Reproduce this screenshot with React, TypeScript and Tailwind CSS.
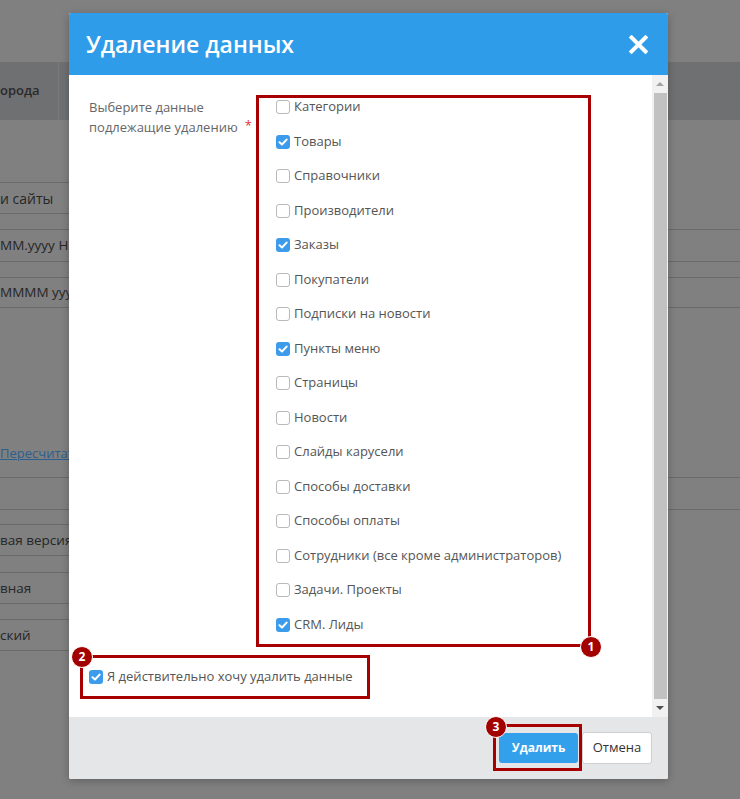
import React from "react";

const items: { label: string; checked: boolean }[] = [
  { label: "Категории", checked: false },
  { label: "Товары", checked: true },
  { label: "Справочники", checked: false },
  { label: "Производители", checked: false },
  { label: "Заказы", checked: true },
  { label: "Покупатели", checked: false },
  { label: "Подписки на новости", checked: false },
  { label: "Пункты меню", checked: true },
  { label: "Страницы", checked: false },
  { label: "Новости", checked: false },
  { label: "Слайды карусели", checked: false },
  { label: "Способы доставки", checked: false },
  { label: "Способы оплаты", checked: false },
  { label: "Сотрудники (все кроме администраторов)", checked: false },
  { label: "Задачи. Проекты", checked: false },
  { label: "CRM. Лиды", checked: true },
];

function Checkbox({ checked }: { checked: boolean }) {
  if (checked) {
    return (
      <span className="flex h-[14px] w-[14px] shrink-0 items-center justify-center rounded-[3px] bg-[#3c9bea]">
        <svg width="10" height="10" viewBox="0 0 10 10">
          <path d="M1.5 5.2 L4 7.5 L8.6 2.6" fill="none" stroke="white" strokeWidth="2" strokeLinecap="round" strokeLinejoin="round" />
        </svg>
      </span>
    );
  }

  return <span className="h-[14px] w-[14px] shrink-0 rounded-[3px] border border-[#b9b9b9] bg-white" />;
}

function Badge({ n, className }: { n: number; className: string }) {
  return (
    <span
      className={
        "absolute flex h-[22px] w-[22px] items-center justify-center rounded-full border border-white bg-[#a30000] text-[12px] font-bold leading-none text-white " +
        className
      }
    >
      {n}
    </span>
  );
}

function Background() {
  return (
    <div className="flex flex-col text-[13px] text-[#262626]">
      <div className="h-[62px]" />
      <div className="flex h-[58px] items-center bg-[#6f7072]">
        <div className="flex h-full w-[59px] items-center border-r border-[#797a7c] font-semibold text-[#2a2a2a]">
          орода
        </div>
      </div>
      <div className="h-[62px]" />
      <div className="flex h-[32px] w-[600px] items-center border-y border-[#6a6a6a] text-[14px]">и сайты</div>
      <div className="h-[15px]" />
      <div className="flex h-[33px] items-center border-y border-[#6a6a6a] text-[13.5px]">ММ.уууу НН:mm</div>
      <div className="h-[15px]" />
      <div className="flex h-[31px] items-center border-y border-[#6a6a6a] text-[13.5px]">ММММ уууу</div>
      <div className="h-[137px]" />
      <div className="flex h-[18px] items-center text-[#2d5f8f] underline">Пересчитать</div>
      <div className="h-[14px]" />
      <div className="h-[33px] border-y border-[#6a6a6a]" />
      <div className="h-[14px]" />
      <div className="flex h-[32px] w-[600px] items-center border-y border-[#6a6a6a] text-[13.5px]">вая версия</div>
      <div className="h-[16px]" />
      <div className="flex h-[32px] w-[600px] items-center border-y border-[#6a6a6a] text-[13.5px]">вная</div>
      <div className="h-[15px]" />
      <div className="flex h-[32px] w-[600px] items-center border-y border-[#6a6a6a] text-[13.5px]">ский</div>
    </div>
  );
}

export default function App() {
  return (
    <div
      className="relative h-[799px] w-full overflow-hidden bg-[#808080]"
      style={{ fontFamily: '"Open Sans", "Noto Sans", sans-serif' }}
    >
      <Background />

      <div className="absolute left-[69px] top-[13px] flex h-[766px] w-[599px] flex-col overflow-visible rounded-[2px] bg-white shadow-[0_2px_8px_rgba(0,0,0,0.25)]">
        <div className="flex h-[62px] items-center justify-between rounded-t-[2px] bg-[#2f9ce9] pl-[17px] pr-[20px]">
          <h2 className="text-[23px] font-semibold text-white">Удаление данных</h2>
          <svg width="19" height="19" viewBox="0 0 19 19">
            <path d="M2.5 2.5 L16.5 16.5 M16.5 2.5 L2.5 16.5" stroke="white" strokeWidth="4" strokeLinecap="square" />
          </svg>
        </div>

        <div className="flex h-[642px]">
          <div className="flex flex-1 flex-col pl-[20px] pt-[20px]">
            <div className="flex">
              <div className="w-[167px] pt-[2px] text-[13px] leading-[20px] text-[#666]">
                Выберите данные
                <br />
                подлежащие удалению
                <span className="relative -top-[2px] ml-[7px] text-[#e0333a]">*</span>
              </div>
              <div className="relative h-[552px] w-[335px] border-[3px] border-[#a80000] pl-[17px]">
                <div className="flex flex-col gap-[16.5px]">
                  {items.map((item) => (
                    <label key={item.label} className="flex h-[18px] items-center gap-[4px] text-[13px] text-[#555]">
                      <Checkbox checked={item.checked} />
                      <span>{item.label}</span>
                    </label>
                  ))}
                </div>
                <Badge n={1} className="-bottom-[14px] -right-[14px]" />
              </div>
            </div>

            <div className="relative -ml-[9px] mt-[8px] flex h-[44px] w-[290px] items-center gap-[4px] border-[3px] border-[#a80000] pl-[6px] text-[13px] text-[#555]">
              <Checkbox checked />
              <span>Я действительно хочу удалить данные</span>
              <Badge n={2} className="-left-[12px] -top-[12px]" />
            </div>
          </div>

          <div className="flex w-[16px] flex-col items-center bg-[#f1f1f1]">
            <div className="flex h-[18px] items-center justify-center">
              <span className="h-0 w-0 border-x-[4px] border-b-[4px] border-x-transparent border-b-[#a3a3a3]" />
            </div>
            <div className="w-[13px] flex-1 bg-[#c1c1c1]" />
            <div className="flex h-[18px] items-center justify-center">
              <span className="h-0 w-0 border-x-[4px] border-t-[4px] border-x-transparent border-t-[#505050]" />
            </div>
          </div>
        </div>

        <div className="flex h-[62px] items-center justify-end gap-[4px] rounded-b-[2px] bg-[#e5e6e8] pr-[16px]">
          <div className="relative">
            <button className="h-[30px] w-[79px] rounded-[3px] bg-[#33a0ec] text-[12px] font-bold text-white">
              Удалить
            </button>
            <span className="absolute -bottom-[8px] -left-[6px] -right-[4px] -top-[9px] border-[3px] border-[#a80000]" />
            <Badge n={3} className="-left-[14px] -top-[17px]" />
          </div>
          <button className="h-[32px] w-[70px] rounded-[3px] border border-[#cfcfcf] bg-white text-[13px] text-[#333]">
            Отмена
          </button>
        </div>
      </div>
    </div>
  );
}
